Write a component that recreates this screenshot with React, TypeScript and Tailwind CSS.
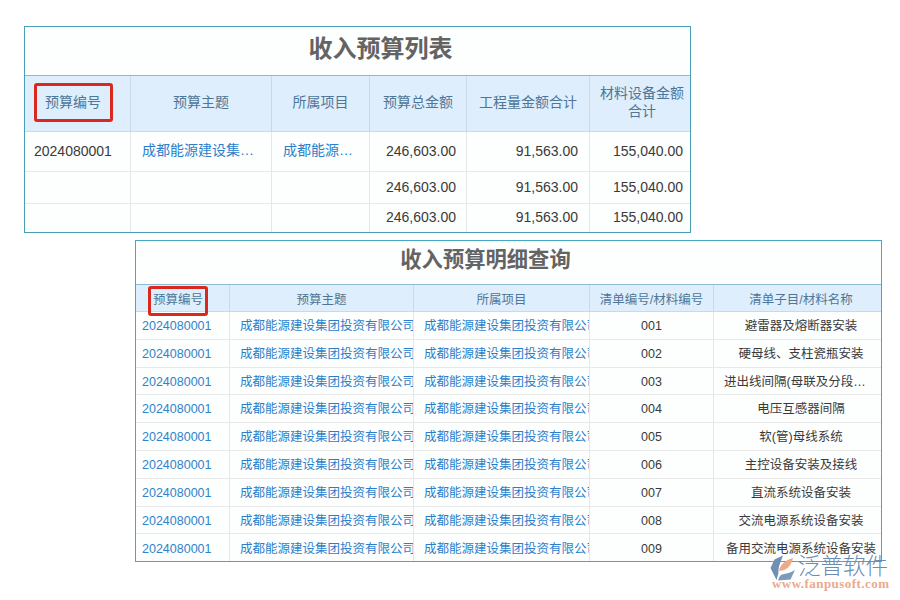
const FONT = "font-['Liberation_Sans','Noto_Sans_CJK_SC',sans-serif]";

const LIST_COLS = "grid grid-cols-[106px_141px_98px_97px_123px_100px]";
const DETAIL_COLS = "grid grid-cols-[94px_184px_176px_124px_167px]";

const COMPANY = "成都能源建设集团投资有限公司";

const LIST_ROWS = [
  { height: "h-10", id: "2024080001", subject: COMPANY, project: COMPANY },
  { height: "h-8", id: "", subject: "", project: "" },
  { height: "h-7", id: "", subject: "", project: "" },
];

const DETAIL_ITEMS = [
  ["001", "避雷器及熔断器安装"],
  ["002", "硬母线、支柱瓷瓶安装"],
  ["003", "进出线间隔(母联及分段)设备安装"],
  ["004", "电压互感器间隔"],
  ["005", "软(管)母线系统"],
  ["006", "主控设备安装及接线"],
  ["007", "直流系统设备安装"],
  ["008", "交流电源系统设备安装"],
  ["009", "备用交流电源系统设备安装"],
];

function ListHead({ children, last }: { children: React.ReactNode; last?: boolean }) {
  return (
    <div
      className={`flex items-center justify-center pb-[4px] text-center leading-[18px] ${
        last ? "pl-[10px] pr-[6px]" : "border-r border-[#c5dbec]"
      }`}
    >
      {children}
    </div>
  );
}

function ListTable() {
  return (
    <section className="ml-6 h-[207px] w-[667px] border border-[#4a9fb8] bg-[#fdfefe]">
      <h1 className="flex h-[49px] items-center justify-center border-b border-[#8cbcd2] pb-[5px] pl-[46px] text-2xl font-bold text-[#636363]">
        收入预算列表
      </h1>
      <div className={`${LIST_COLS} h-14 border-b border-[#c5dbec] bg-[#deeefc] text-sm text-[#4f7697]`}>
        <ListHead>
          <span className="relative top-px mr-[9px] flex h-[39px] w-[79px] shrink-0 items-center justify-center rounded-[3px] border-[3px] border-[#d9281e] pb-[2px]">
            预算编号
          </span>
        </ListHead>
        <ListHead>预算主题</ListHead>
        <ListHead>所属项目</ListHead>
        <ListHead>预算总金额</ListHead>
        <ListHead>工程量金额合计</ListHead>
        <ListHead last>材料设备金额合计</ListHead>
      </div>
      {LIST_ROWS.map((row, i) => (
        <div
          key={i}
          className={`${LIST_COLS} ${row.height} text-sm text-[#3a3a3a] ${i < 2 ? "border-b border-[#e8e8e8]" : ""}`}
        >
          <div className="flex items-center border-r border-[#e4e6ea] pb-[2px] pl-[9px]">{row.id}</div>
          <div className="flex min-w-0 items-center border-r border-[#e4e6ea] px-[11px] pb-[3px] text-[#2b7ecb]">
            <span className="truncate">{row.subject}</span>
          </div>
          <div className="flex min-w-0 items-center border-r border-[#e4e6ea] px-[11px] pb-[3px] text-[#2b7ecb]">
            <span className="truncate">{row.project}</span>
          </div>
          <div className="flex items-center justify-end border-r border-[#e4e6ea] pb-[2px] pr-[10px]">246,603.00</div>
          <div className="flex items-center justify-end border-r border-[#e4e6ea] pb-[2px] pr-[11px]">91,563.00</div>
          <div className="flex items-center justify-end pb-[2px] pr-[7px]">155,040.00</div>
        </div>
      ))}
    </section>
  );
}

function DetailTable() {
  return (
    <section className="ml-[135px] mt-[7px] h-[322px] w-[747px] overflow-hidden border border-[#41a9c0] bg-[#fdfefe] text-[12.5px]">
      <h2 className="flex h-11 items-center justify-center border-b border-[#8cbcd2] pb-[3px] pr-[46px] text-[21.3px] font-bold text-[#636363]">
        收入预算明细查询
      </h2>
      <div className={`${DETAIL_COLS} h-[27px] border-b border-[#c5dbec] bg-[#deeefc] text-[#4f7697]`}>
        <div className="flex items-center justify-center border-r border-[#c5dbec] pb-[4px]">
          <span className="relative top-px mr-[9px] flex h-[30px] w-[60px] shrink-0 items-center justify-center rounded-[3px] border-[3px] border-[#d9281e] pb-[2px]">
            预算编号
          </span>
        </div>
        <div className="flex items-center justify-center border-r border-[#c5dbec] pb-[4px]">预算主题</div>
        <div className="flex items-center justify-center border-r border-[#c5dbec] pb-[4px]">所属项目</div>
        <div className="flex items-center justify-center border-r border-[#c5dbec] pb-[4px]">清单编号/材料编号</div>
        <div className="flex items-center justify-center pb-[4px] pl-[7px]">清单子目/材料名称</div>
      </div>
      {DETAIL_ITEMS.map(([code, name], i) => (
        <div
          key={code}
          className={`${DETAIL_COLS} h-[27.8px] ${i < 8 ? "border-b border-[#e8e8e8]" : ""}`}
        >
          <div className="flex items-center border-r border-[#e4e6ea] pl-[6px] pt-[2px] text-[#3083c8]">2024080001</div>
          <div className="flex items-center overflow-hidden whitespace-nowrap border-r border-[#e4e6ea] pl-[10px] pt-[2px] text-[#2b7ecb]">
            {COMPANY}
          </div>
          <div className="flex items-center overflow-hidden whitespace-nowrap border-r border-[#e4e6ea] pl-[10px] pt-[2px] text-[#2b7ecb]">
            {COMPANY}
          </div>
          <div className="flex items-center justify-center border-r border-[#e4e6ea] pt-[2px] text-[#3a3a3a]">{code}</div>
          <div
            className={`flex min-w-0 items-center justify-center pt-[2px] text-[#3a3a3a] ${
              i === 2 ? "pl-[10px] pr-[14px]" : "pl-[7px]"
            }`}
          >
            <span className="truncate">{name}</span>
          </div>
        </div>
      ))}
    </section>
  );
}

function Watermark() {
  return (
    <div className="absolute left-[770px] top-[555px] w-[124px]">
      <svg className="absolute left-0 top-0" width="26" height="26" viewBox="0 0 26 26">
        <path d="M13 0.5 4.5 4.5 0.5 13 6.5 25 8.5 18C8 13 10 8 13 0.5z" fill="#6f8fb3" />
        <path d="M9 16C10 10 15 5 23 3 22 8 19.5 12 16 14 13.5 15.5 11 15.5 9 16z" fill="#eda98a" />
        <path d="M8 25.5 20.5 24.5 25 15C21 18 16 18.5 12 19.5 10 20 9 22 8 25.5z" fill="#7d9abb" />
      </svg>
      <div className="ml-[28px] text-[22.5px] font-light leading-[23px] text-[#6b8cb0]">泛普软件</div>
      <div className="ml-[2px] font-['Liberation_Serif',serif] text-[13px] font-bold leading-[11px] tracking-[0.45px] text-[#eba98c]">
        www.fanpusoft.com
      </div>
    </div>
  );
}

export default function App() {
  return (
    <div className={`${FONT} relative h-[600px] w-[900px] overflow-hidden bg-white pt-[26px]`}>
      <ListTable />
      <DetailTable />
      <Watermark />
    </div>
  );
}
